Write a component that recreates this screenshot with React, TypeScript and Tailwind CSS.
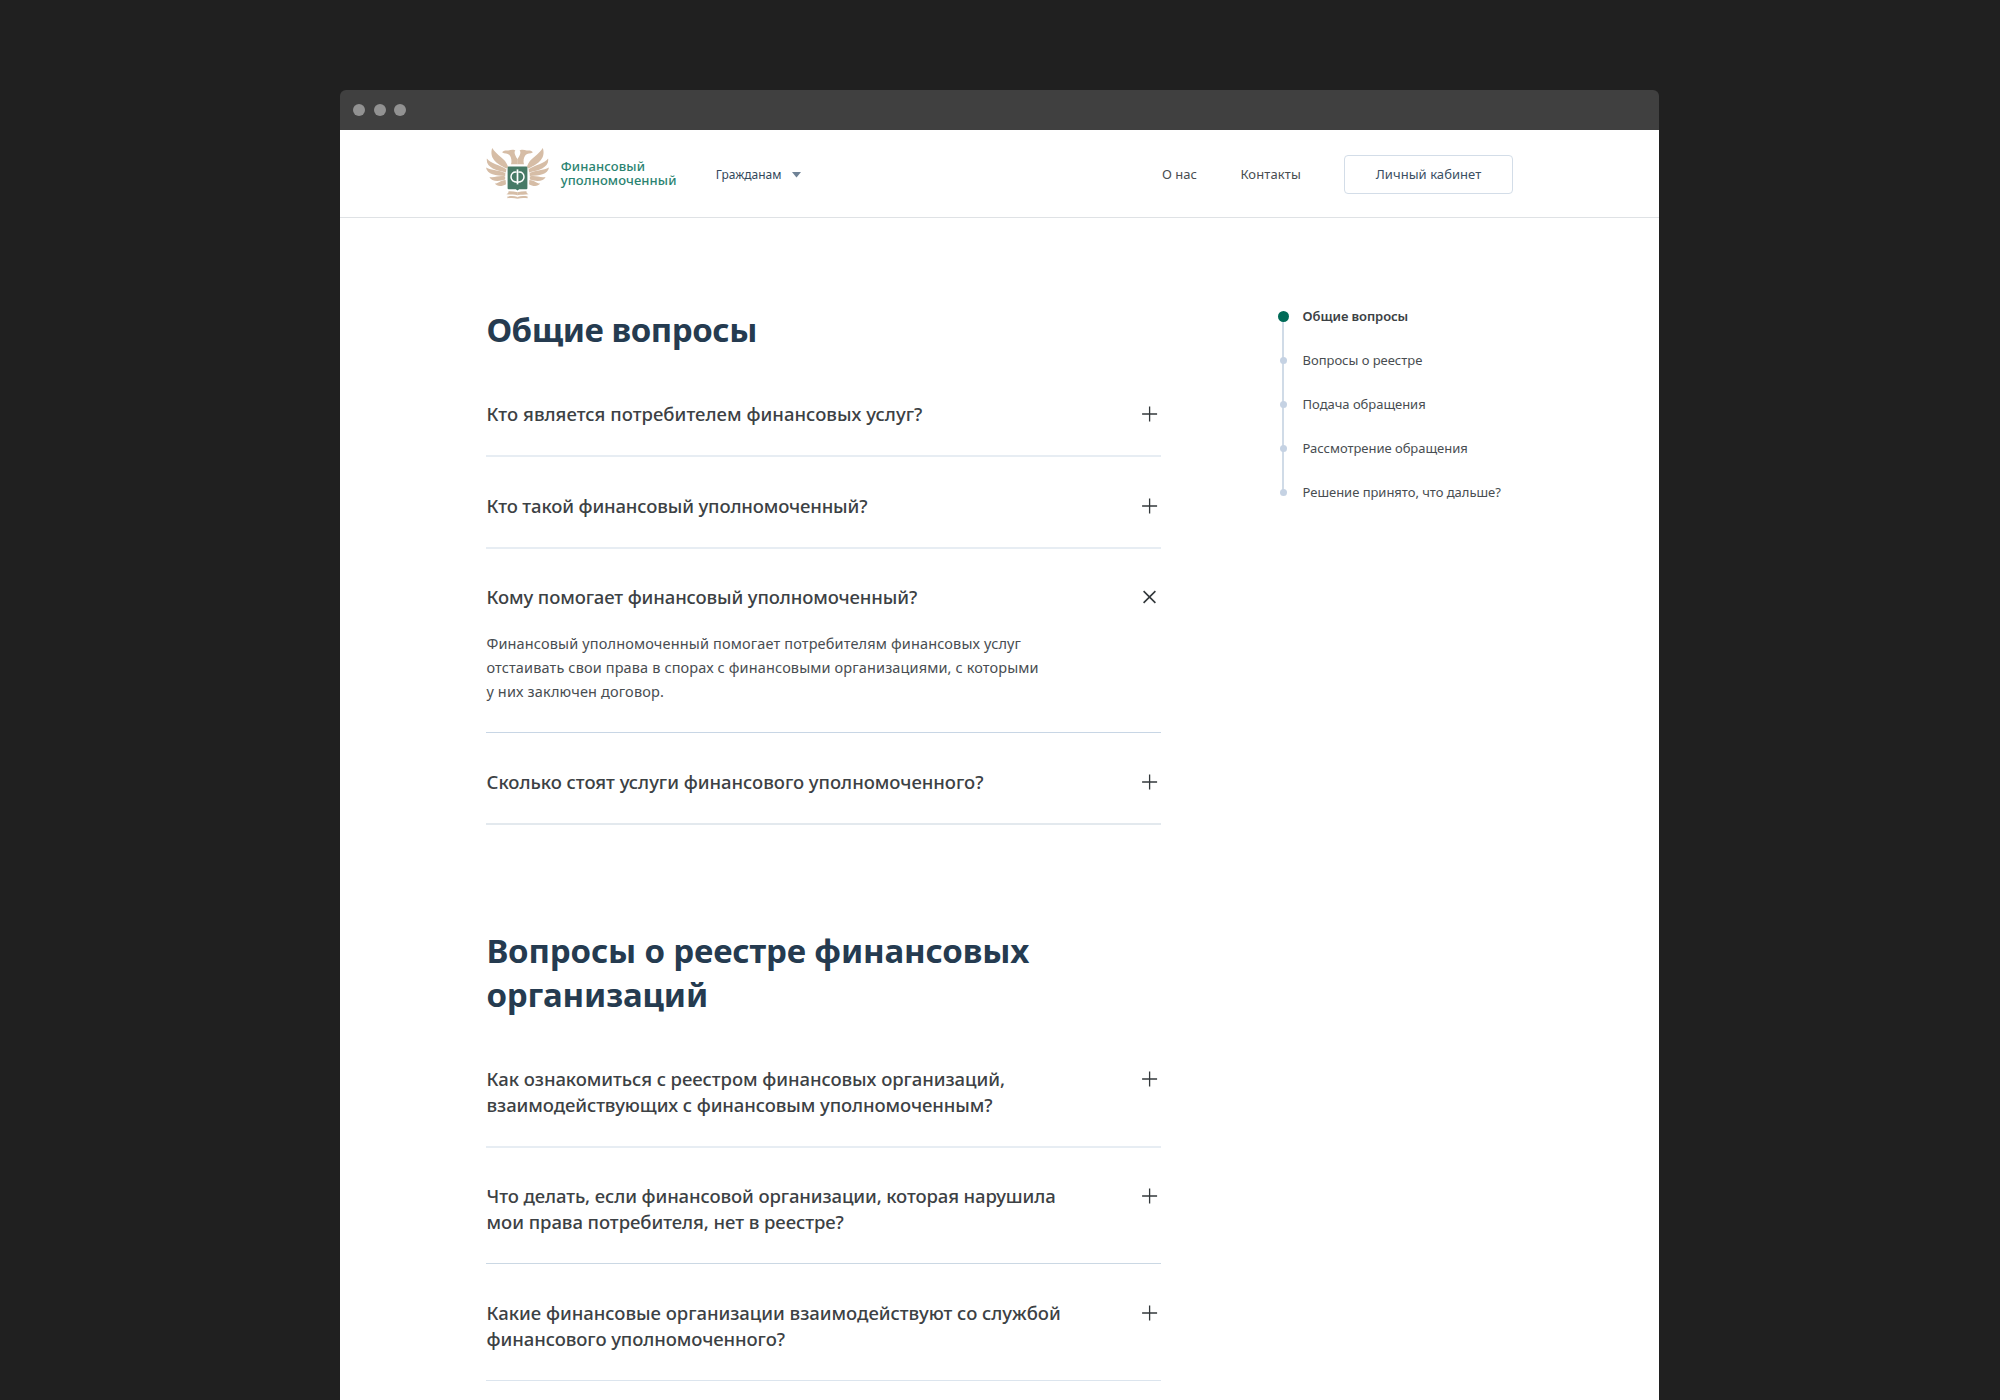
type Line = { text: string; tracking: string };
type Question = {
  lines: Line[];
  box: string;
  answer?: Line[];
};

const general: Question[] = [
  {
    lines: [{ text: "Кто является потребителем финансовых услуг?", tracking: "tracking-[0.03px]" }],
    box: "h-[92px] pt-[37px] border-b-2 border-[#e7edf3]",
  },
  {
    lines: [{ text: "Кто такой финансовый уполномоченный?", tracking: "tracking-[-0.14px]" }],
    box: "h-[92px] pt-[37px] border-b-2 border-[#e7edf3]",
  },
  {
    lines: [{ text: "Кому помогает финансовый уполномоченный?", tracking: "tracking-[-0.12px]" }],
    box: "h-[184px] pt-9 border-b border-[#c8d6e5]",
    answer: [
      { text: "Финансовый уполномоченный помогает потребителям финансовых услуг", tracking: "tracking-[0.145px]" },
      { text: "отстаивать свои права в спорах с финансовыми организациями, с которыми", tracking: "tracking-[0.13px]" },
      { text: "у них заключен договор.", tracking: "tracking-[0.16px]" },
    ],
  },
  {
    lines: [{ text: "Сколько стоят услуги финансового уполномоченного?", tracking: "tracking-[-0.03px]" }],
    box: "h-[92px] pt-[37px] border-b-2 border-[#e3e9ee]",
  },
];

const registry: Question[] = [
  {
    lines: [
      { text: "Как ознакомиться с реестром финансовых организаций,", tracking: "tracking-[-0.06px]" },
      { text: "взаимодействующих с финансовым уполномоченным?", tracking: "tracking-[-0.09px]" },
    ],
    box: "h-[119px] pt-[38px] border-b-2 border-[#e7edf3]",
  },
  {
    lines: [
      { text: "Что делать, если финансовой организации, которая нарушила", tracking: "tracking-[-0.11px]" },
      { text: "мои права потребителя, нет в реестре?", tracking: "tracking-[-0.06px]" },
    ],
    box: "h-[116px] pt-9 border-b border-[#cbd8e4]",
  },
  {
    lines: [
      { text: "Какие финансовые организации взаимодействуют со службой", tracking: "tracking-[-0.03px]" },
      { text: "финансового уполномоченного?", tracking: "tracking-[-0.08px]" },
    ],
    box: "h-[117px] pt-[37px] border-b border-[#dce5ee]",
  },
];

const anchors = [
  "Общие вопросы",
  "Вопросы о реестре",
  "Подача обращения",
  "Рассмотрение обращения",
  "Решение принято, что дальше?",
];

function Wing() {
  return (
    <g fill="#d6bda6">
      <path d="M6.2 0C10.5 7.5 19.5 10 22 18.6L21 20.6C13 17 2.5 11.5 6.2 0Z" />
      <path d="M.9 10.4C4.5 15.8 14 16.5 20.4 21.2L19.8 24.4C10 22.4-.6 19.6.9 10.4Z" />
      <path d="M0 19.6C5.5 22.8 13 22 19.4 25L19.2 28C10 28 1 26.4 0 19.6Z" />
      <path d="M3.4 28.9C8.6 30 13 27.2 19.2 28.4V31.6C12.5 33.8 5.2 33.6 3.4 28.9Z" />
      <path d="M8.8 35.6C12.6 35.4 14 32.3 19.6 31.9L20 36.2C16.6 38.4 11 39 8.8 35.6Z" />
      <path d="M16.2 4.6C17 2.4 19.8 2.3 22.4 2.6C24.6 1.4 28.6 1.4 29.4 2.5C27.6 4 29 7.6 31.6 11.2V16.3H25C26 13.4 25.4 9 23.4 7C21.6 5.2 18.6 6 16.2 4.6Z" />
      <path d="M20.4 46.2C22.4 45.4 22.4 44.4 22.6 43.2C25.6 43 28.6 43.6 31.6 44.2V47.2C28 46.2 24 47 20.4 46.2Z" />
      <path d="M21.4 48.6C25 47.8 28.6 48 31.6 49V50.8C28.6 49.8 25 50 21.4 50.2Z" />
    </g>
  );
}

function Emblem() {
  return (
    <svg className="mt-[-2px] mr-[0.5px] ml-[0.2px] h-[51px] w-[63px] shrink-0" viewBox="0 0 63 51">
      <Wing />
      <g transform="translate(63 0) scale(-1 1)">
        <Wing />
      </g>
      <path
        d="M22.6 18.6H40.4Q41.4 18.6 41.4 19.6V40.2Q41.4 41.2 40.4 41.2H33.2L31.5 42.4L29.8 41.2H22.6Q21.6 41.2 21.6 40.2V19.6Q21.6 18.6 22.6 18.6Z"
        fill="#477a66"
      />
      <g fill="none" stroke="#fff">
        <path d="M30.6 24.2C27 23.6 24.9 26 25 29C25.1 32.4 28 34 31.5 34.3C35 34 37.9 32.4 38 29C38.1 26 36 23.6 32.4 24.2" strokeWidth="1.5" />
        <path d="M31.5 21.4V36.4" strokeWidth="1.7" />
      </g>
    </svg>
  );
}

function Toggle({ open }: { open?: boolean }) {
  return (
    <svg className="mt-1 mr-[3px] size-4 shrink-0" viewBox="0 0 16 16" stroke="#33383b" strokeWidth="1.3">
      {open ? <path d="M1.6 2.1L13.4 13.9M13.4 2.1L1.6 13.9" strokeWidth="1.6" /> : <path d="M7.6 .6V15.4M.1 8H15.1" />}
    </svg>
  );
}

function Item({ q }: { q: Question }) {
  return (
    <li className={q.box}>
      <div className="flex items-start justify-between">
        <h3 className="mt-[-1px] ml-[0.6px] text-[18.5px] leading-[26px] font-medium whitespace-nowrap text-[#3c4144]">
          {q.lines.map((l) => (
            <span key={l.text} className={`block ${l.tracking}`}>
              {l.text}
            </span>
          ))}
        </h3>
        <Toggle open={!!q.answer} />
      </div>
      {q.answer && (
        <p className="mt-[21px] ml-[0.4px] text-[14.5px] leading-6 whitespace-nowrap text-[#484d51]">
          {q.answer.map((l) => (
            <span key={l.text} className={`block ${l.tracking}`}>
              {l.text}
            </span>
          ))}
        </p>
      )}
    </li>
  );
}

export default function App() {
  return (
    <div className="h-[1400px] w-[2000px] overflow-hidden bg-[#202020] pt-[90px] pl-[340px] font-['Noto_Sans',sans-serif]">
      <div className="h-[1310px] w-[1319px]">
        <div className="flex h-10 items-center gap-[8.5px] rounded-t-md bg-[#404040] pl-[13px]">
          <span className="size-3 rounded-full bg-[#929292]" />
          <span className="size-3 rounded-full bg-[#929292]" />
          <span className="size-3 rounded-full bg-[#929292]" />
        </div>

        <div className="h-[1270px] bg-white">
          <header className="flex h-[88px] items-center border-b border-[#dfe2e5] pt-0.5 pr-[146px] pl-[146px] text-[13px] whitespace-nowrap text-[#484d51]">
            <Emblem />
            <div className="mt-[-3px] ml-[11px] w-[155px] leading-[14px] font-medium text-[#2b8371]">
              <span className="block tracking-[0.135px]">Финансовый</span>
              <span className="block tracking-[0.112px]">уполномоченный</span>
            </div>
            <div className="mt-px flex items-center gap-[10.5px] text-xs text-[#33475b]">
              Гражданам
              <svg className="h-[5.5px] w-[9px]" viewBox="0 0 9 5" preserveAspectRatio="none">
                <path d="M0 0H9L4.5 5Z" fill="#6f8296" />
              </svg>
            </div>
            <nav className="ml-auto flex items-center">
              <span className="mt-px">О нас</span>
              <span className="mt-px ml-[43.5px] tracking-[0.12px]">Контакты</span>
              <span className="ml-[43px] flex h-[39px] w-[169px] items-center justify-center rounded border border-[#d3dde8] pt-px tracking-[0.05px] text-[#3b4f63]">
                Личный кабинет
              </span>
            </nav>
          </header>

          <div className="flex justify-between pr-[146px] pl-[146px]">
            <main className="w-[675px] pt-[90px]">
              <section>
                <h2 className="mb-[13px] ml-[0.4px] text-[33px] leading-[44px] font-bold tracking-[-0.45px] whitespace-nowrap text-[#253b50]">
                  Общие вопросы
                </h2>
                <ul>
                  {general.map((q) => (
                    <Item key={q.lines[0].text} q={q} />
                  ))}
                </ul>
              </section>
              <section className="mt-[104px]">
                <h2 className="mb-3 ml-[0.4px] text-[33px] leading-[44px] font-bold tracking-[-0.15px] whitespace-nowrap text-[#253b50]">
                  Вопросы о реестре финансовых
                  <br />
                  организаций
                </h2>
                <ul>
                  {registry.map((q) => (
                    <Item key={q.lines[0].text} q={q} />
                  ))}
                </ul>
              </section>
            </main>

            <aside className="w-[236px] pt-[77px]">
              <ol className="relative">
                <li className="absolute top-[22px] left-[5px] h-44 w-0.5 bg-[#d0dbe7]" />
                {anchors.map((a, i) => (
                  <li
                    key={a}
                    className={`relative flex h-11 items-center gap-[13.6px] text-[13px] whitespace-nowrap ${
                      i === 0 ? "font-semibold tracking-[-0.08px] text-[#3c4144]" : "tracking-[-0.03px] text-[#484d51]"
                    }`}
                  >
                    <span className="-mt-px flex w-3 justify-center">
                      <span className={i === 0 ? "size-[11px] rounded-full bg-[#006b58]" : "size-[7px] rounded-full bg-[#c5d2e3]"} />
                    </span>
                    {a}
                  </li>
                ))}
              </ol>
            </aside>
          </div>
        </div>
      </div>
    </div>
  );
}
